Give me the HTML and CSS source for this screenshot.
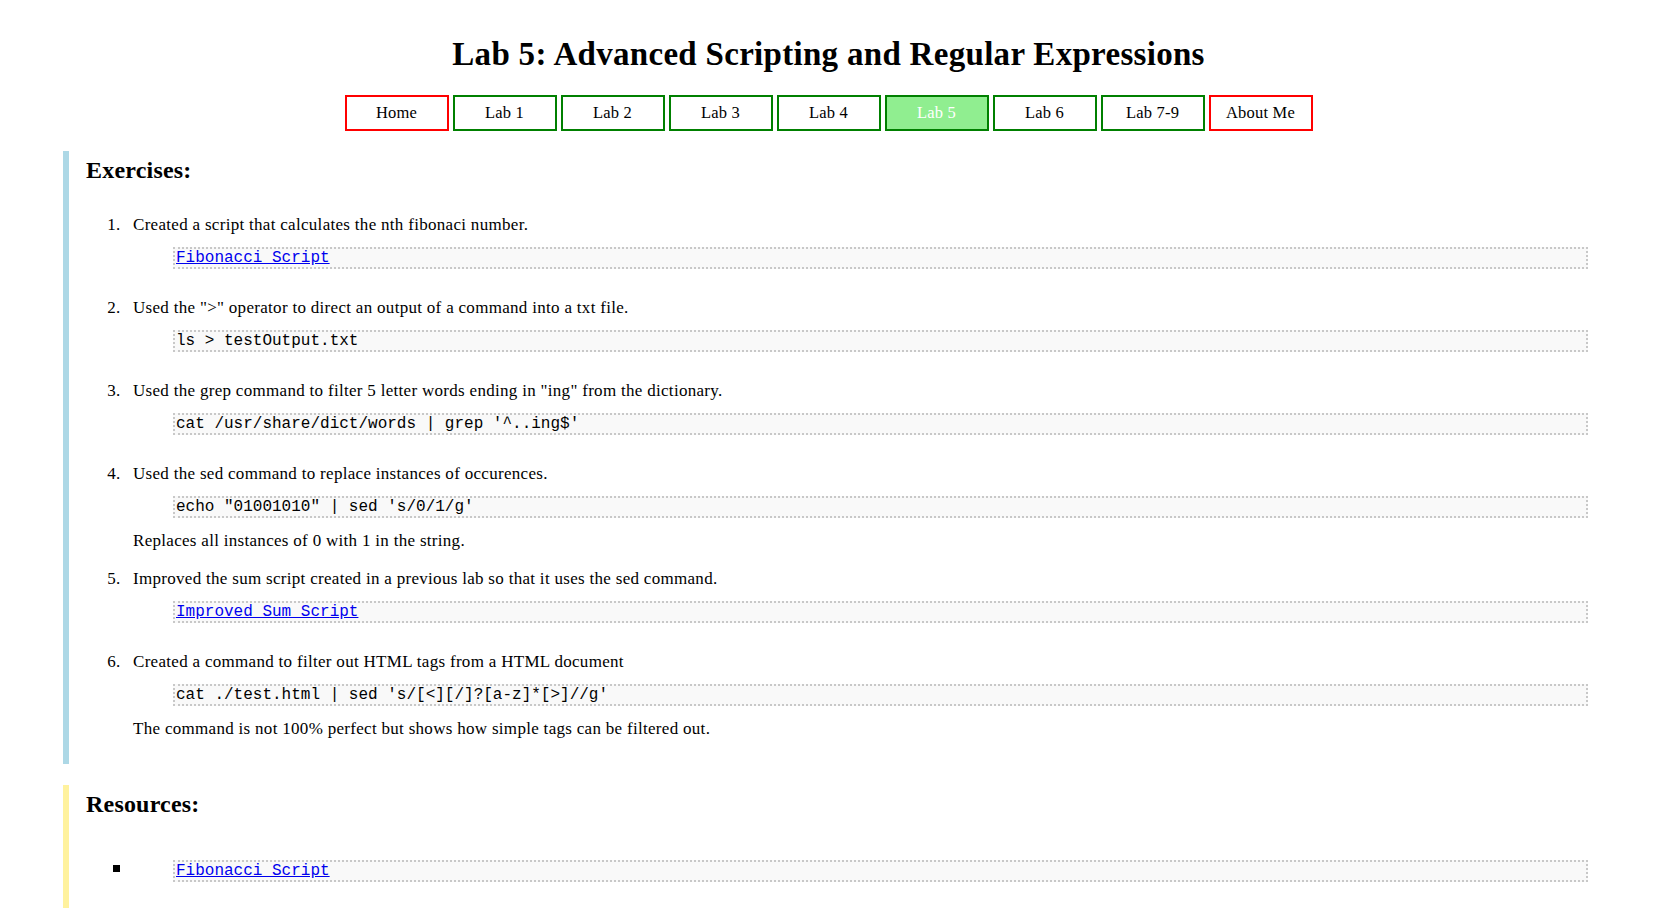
FILE: index.html
```html
<!DOCTYPE html>
<html lang="en">
<head>
<meta charset="utf-8">
<title>Lab 5</title>
<link rel="stylesheet" href="styles.css">
</head>
<body>
<h1 class="title">Lab 5: Advanced Scripting and Regular Expressions</h1>
<nav class="nav">
  <a class="btn btn-red" href="#">Home</a>
  <a class="btn" href="#">Lab 1</a>
  <a class="btn" href="#">Lab 2</a>
  <a class="btn" href="#">Lab 3</a>
  <a class="btn" href="#">Lab 4</a>
  <a class="btn btn-active" href="#">Lab 5</a>
  <a class="btn" href="#">Lab 6</a>
  <a class="btn" href="#">Lab 7-9</a>
  <a class="btn btn-red" href="#">About Me</a>
</nav>

<section class="section section-blue">
  <h2 class="section-title">Exercises:</h2>
  <ol class="list list-num">
    <li class="item">Created a script that calculates the nth fibonaci number.
      <pre class="code"><a href="#">Fibonacci Script</a></pre>
    </li>
    <li class="item">Used the "&gt;" operator to direct an output of a command into a txt file.
      <pre class="code">ls &gt; testOutput.txt</pre>
    </li>
    <li class="item">Used the grep command to filter 5 letter words ending in "ing" from the dictionary.
      <pre class="code">cat /usr/share/dict/words | grep '^..ing$'</pre>
    </li>
    <li class="item item-note">Used the sed command to replace instances of occurences.
      <pre class="code">echo "01001010" | sed 's/0/1/g'</pre>
      <p class="note">Replaces all instances of 0 with 1 in the string.</p>
    </li>
    <li class="item">Improved the sum script created in a previous lab so that it uses the sed command.
      <pre class="code"><a href="#">Improved Sum Script</a></pre>
    </li>
    <li class="item item-note">Created a command to filter out HTML tags from a HTML document
      <pre class="code">cat ./test.html | sed 's/[&lt;][/]?[a-z]*[&gt;]//g'</pre>
      <p class="note">The command is not 100% perfect but shows how simple tags can be filtered out.</p>
    </li>
  </ol>
</section>

<section class="section section-yellow">
  <h2 class="section-title">Resources:</h2>
  <ul class="list list-square">
    <li class="item"><pre class="code"><a href="#">Fibonacci Script</a></pre></li>
  </ul>
</section>
</body>
</html>
```

FILE: styles.css
```css
body {
  margin: 8px;
  font-family: "Palatino Linotype", "Book Antiqua", Palatino, "Liberation Serif", serif;
  font-size: 17px;
  letter-spacing: 0.3px;
  color: #000;
  background: #fff;
}

.title {
  text-align: center;
  font-size: 33px;
  letter-spacing: 0.3px;
  font-weight: bold;
  margin: 27px 0 0;
  line-height: 38px;
}

.nav {
  display: flex;
  justify-content: center;
  gap: 4px;
  margin-top: 22px;
}

.btn {
  display: block;
  width: 100px;
  border: 2px solid #008000;
  padding: 7px 0;
  line-height: 18px;
  text-align: center;
  color: #000;
  text-decoration: none;
  font-size: 16.5px;
  letter-spacing: 0.2px;
}

.btn-red {
  border-color: #ff0000;
}

.btn-active {
  background: #90ee90;
  color: #fff;
}

.section {
  margin: 20px 61px 0 55px;
  padding: 5px 0 26px 17px;
  border-left: 6px solid #add8e6;
}

.section-yellow {
  border-left-color: #fff29e;
  margin-top: 21px;
}

.section-title {
  margin: 0;
  font-size: 24px;
  letter-spacing: 0.2px;
  line-height: 28px;
  font-weight: bold;
}

.list {
  margin: 31px 0 0;
  padding-left: 47px;
  line-height: 19px;
}

.list-num > li::marker {
  content: counter(list-item) ".\2002\2009";
}

.list-square {
  list-style: square;
  margin-top: 40px;
}

.list-square > li::marker {
  font-size: 22px;
}

.item {
  margin-bottom: 29px;
}

.item:last-child {
  margin-bottom: 0;
}

.item-note {
  margin-bottom: 19px;
}

.code {
  margin: 13px 0 0 40px;
  padding: 0 1px;
  border: 2px dotted #c8c8c8;
  background: #f9f9f9;
  font-family: "Courier New", "Liberation Mono", monospace;
  font-size: 16px;
  letter-spacing: 0;
  line-height: 18px;
}

.code a {
  color: #0000ee;
}

.note {
  margin: 13px 0 0;
}
```
